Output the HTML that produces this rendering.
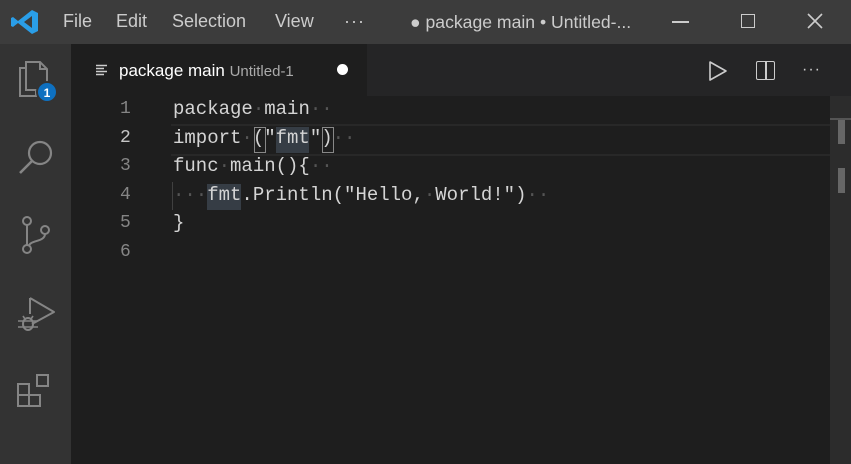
<!DOCTYPE html>
<html><head><style>
body{margin:0;width:851px;height:464px;overflow:hidden;background:#1e1e1e;font-family:"Liberation Sans",sans-serif;position:relative}
.a{position:absolute}
.menu{color:#ccc;font-size:18px;top:11px}
.code{font-family:"Liberation Mono",monospace;font-size:19px;color:#d4d4d4;white-space:pre;left:173px}
.ln{font-family:"Liberation Mono",monospace;font-size:18px;color:#858585;left:120px}
.d{color:#555}
</style></head><body>
<div class="a" style="left:0;top:0;width:851px;height:44px;background:#3c3c3c"></div>
<svg class="a" style="left:10px;top:8px" width="30" height="28" viewBox="0 0 30 28"><path d="M22 2 L28 5 V23 L22 26 L8 15 L3 19 L1 18 V10 L3 9 L8 13 Z M22 8 L14 14 L22 20 Z" fill="#2a9ee8"/></svg>
<div class="a menu" style="left:63px">File</div>
<div class="a menu" style="left:116px">Edit</div>
<div class="a menu" style="left:172px">Selection</div>
<div class="a menu" style="left:275px">View</div>
<div class="a menu" style="left:344px;letter-spacing:1px">···</div>
<div class="a" style="left:410px;top:12px;color:#ccc;font-size:17.6px">● package main • Untitled-...</div>
<div class="a" style="left:672px;top:21px;width:17px;height:1.5px;background:#ccc"></div>
<div class="a" style="left:741px;top:14px;width:12px;height:12px;border:1.5px solid #ccc"></div>
<svg class="a" style="left:807px;top:13px" width="16" height="16"><path d="M1 1L15 15M15 1L1 15" stroke="#ccc" stroke-width="1.6"/></svg>
<div class="a" style="left:0;top:44px;width:71px;height:420px;background:#333"></div>
<div class="a" style="left:71px;top:44px;width:780px;height:52px;background:#252526"></div>
<div class="a" style="left:71px;top:44px;width:296px;height:52px;background:#1e1e1e"></div>
<svg class="a" style="left:16px;top:60px" width="40" height="45"><path d="M10 8H4V36H20V30M10 2H24L31 9V30H10Z M24 2V9H31" stroke="#858585" stroke-width="2" fill="none"/><circle cx="31" cy="32" r="10" fill="#0e70c0" stroke="#333" stroke-width="2"/><text x="31" y="37" font-size="12" font-weight="bold" fill="#fff" text-anchor="middle" font-family="Liberation Sans">1</text></svg>
<svg class="a" style="left:16px;top:138px" width="40" height="40"><circle cx="24" cy="15" r="11" stroke="#858585" stroke-width="2.2" fill="none"/><path d="M16 23L4 35" stroke="#858585" stroke-width="2.6"/></svg>
<svg class="a" style="left:18px;top:214px" width="34" height="44"><circle cx="9" cy="7" r="4" stroke="#858585" stroke-width="2" fill="none"/><circle cx="9" cy="35" r="4" stroke="#858585" stroke-width="2" fill="none"/><circle cx="27" cy="16" r="4" stroke="#858585" stroke-width="2" fill="none"/><path d="M9 11V31M27 20C27 28 12 26 11 32" stroke="#858585" stroke-width="2" fill="none"/></svg>
<svg class="a" style="left:14px;top:292px" width="42" height="42"><path d="M16 6V22M16 6L40 20L18 32" stroke="#858585" stroke-width="2" fill="none" stroke-linejoin="round"/><ellipse cx="14" cy="32" rx="5" ry="6" stroke="#858585" stroke-width="2" fill="none"/><path d="M4 29H24M4 35H24M9 24L11 27M19 24L17 27" stroke="#858585" stroke-width="1.6"/></svg>
<svg class="a" style="left:16px;top:372px" width="40" height="40"><path d="M2 12H13V23H2ZM2 23H13V34H2ZM13 23H24V34H13Z" stroke="#858585" stroke-width="2" fill="none"/><rect x="21" y="3" width="11" height="11" stroke="#858585" stroke-width="2" fill="none"/></svg>
<svg class="a" style="left:96px;top:64px" width="12" height="12"><path d="M0 1.5H11M0 4.5H8M0 7.5H11M0 10.5H8" stroke="#ccc" stroke-width="1.4"/></svg>
<div class="a" style="left:119px;top:61px;color:#fff;font-size:17px">package main <span style="color:#aaa;font-size:15px">Untitled-1</span></div>
<div class="a" style="left:337px;top:64px;width:11px;height:11px;border-radius:50%;background:#fff"></div>
<svg class="a" style="left:707px;top:60px" width="22" height="22"><path d="M3 2L19 11L3 20Z" stroke="#ccc" stroke-width="1.6" fill="none" stroke-linejoin="round"/></svg>
<div class="a" style="left:756px;top:61px;width:17px;height:17px;border:1.6px solid #ccc;border-radius:2px"></div>
<div class="a" style="left:765px;top:62px;width:1.6px;height:17px;background:#ccc"></div>
<div class="a" style="left:802px;top:61px;color:#ccc;font-size:16px;letter-spacing:1px">···</div>
<div class="a" style="left:171px;top:124px;width:659px;height:28px;border-top:2px solid #282828;border-bottom:2px solid #282828"></div>
<div class="a" style="left:830px;top:96px;width:21px;height:368px;background:#2c2c2c"></div>
<div class="a" style="left:830px;top:118px;width:21px;height:2px;background:#555"></div>
<div class="a" style="left:838px;top:120px;width:7px;height:24px;background:#666"></div>
<div class="a" style="left:838px;top:168px;width:7px;height:25px;background:#666"></div>
<div class="a ln" style="top:99px">1</div>
<div class="a ln" style="top:128px;color:#c6c6c6">2</div>
<div class="a ln" style="top:156px">3</div>
<div class="a ln" style="top:185px">4</div>
<div class="a ln" style="top:213px">5</div>
<div class="a ln" style="top:242px">6</div>
<div class="a" style="left:276px;top:127px;width:33px;height:26px;background:#363d45"></div>
<div class="a" style="left:254px;top:127px;width:10px;height:24px;border:1px solid #888"></div>
<div class="a" style="left:322px;top:127px;width:10px;height:24px;border:1px solid #888"></div>
<div class="a" style="left:207px;top:184px;width:34px;height:26px;background:#363d45"></div>
<div class="a" style="left:172px;top:182px;width:1px;height:28px;background:#404040"></div>
<div class="a code" style="top:98px">package<span class="d">·</span>main<span class="d">··</span></div>
<div class="a code" style="top:127px">import<span class="d">·</span>("fmt")<span class="d">··</span></div>
<div class="a code" style="top:155px">func<span class="d">·</span>main(){<span class="d">··</span></div>
<div class="a code" style="top:184px"><span class="d">···</span>fmt.Println("Hello,<span class="d">·</span>World!")<span class="d">··</span></div>
<div class="a code" style="top:212px">}</div>
</body></html>
